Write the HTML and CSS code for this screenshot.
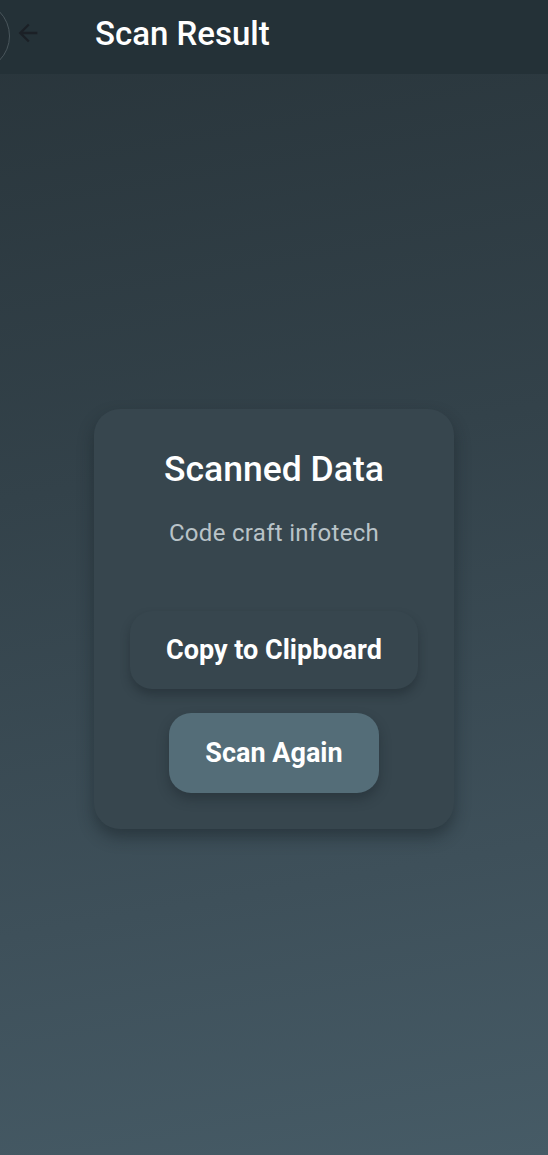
FILE: index.html
```html
<!DOCTYPE html>
<html>
<head>
<meta charset="utf-8">
<link rel="stylesheet" href="styles.css">
</head>
<body>
<div class="page">
  <header class="appbar">
    <div class="back">
      <span class="ripple"></span>
      <svg class="arrow" width="28" height="28" viewBox="0 0 24 24"><path d="M20 11H7.83l5.59-5.59L12 4l-8 8 8 8 1.41-1.41L7.83 13H20v-2z" fill="#1b2026"/></svg>
    </div>
    <h1 class="title">Scan Result</h1>
  </header>
  <main class="content">
    <div class="card">
      <h2 class="card-title">Scanned Data</h2>
      <p class="data">Code craft infotech</p>
      <button class="btn btn-copy">Copy to Clipboard</button>
      <button class="btn btn-scan">Scan Again</button>
    </div>
  </main>
</div>
</body>
</html>
```
FILE: styles.css
```css
* { box-sizing: border-box; }
html, body { margin: 0; padding: 0; }
body {
  width: 548px;
  height: 1155px;
  font-family: Roboto, "Noto Sans", sans-serif;
  background: linear-gradient(170deg, #28343a 0%, #33424a 40%, #3e505a 75%, #465b66 100%);
  overflow: hidden;
}
.page { display: flex; flex-direction: column; height: 1155px; }
.appbar {
  height: 74px;
  background: #243137;
  display: flex;
  align-items: center;
  position: relative;
  flex-shrink: 0;
}
.back {
  width: 95px;
  height: 74px;
  position: relative;
  display: flex;
  align-items: center;
}
.ripple {
  position: absolute;
  left: -60px;
  top: 1px;
  width: 70px;
  height: 70px;
  border-radius: 50%;
  border: 1.5px solid #4a565c;
  background: #222d33;
}
.arrow { position: absolute; left: 14px; top: 19px; }
.title {
  margin: 0;
  color: #ffffff;
  font-size: 33px;
  font-weight: 500;
  position: relative;
  top: -4px;
  letter-spacing: 0;
}
.content {
  flex: 1;
  display: flex;
  justify-content: center;
  padding-top: 335px;
}
.card {
  width: 360px;
  height: 420px;
  background: #37464e;
  border-radius: 26px;
  box-shadow: 0 8px 16px rgba(20, 28, 33, 0.45);
  display: flex;
  flex-direction: column;
  align-items: center;
  padding-top: 40px;
}
.card-title {
  margin: 0;
  color: #ffffff;
  font-size: 35.5px;
  font-weight: 500;
  line-height: 40px;
}
.data {
  margin: 30px 0 0;
  color: #b9c3c8;
  font-size: 24px;
  line-height: 28px;
  letter-spacing: 0.3px;
}
.btn {
  border: none;
  font-family: Roboto, "Noto Sans", sans-serif;
  font-weight: 700;
  font-size: 27px;
  color: #ffffff;
  border-radius: 22px;
  padding: 0;
}
.btn-copy {
  margin-top: 64px;
  width: 288px;
  height: 78px;
  background: #37464e;
  box-shadow: 0 6px 10px rgba(20, 28, 33, 0.35);
}
.btn-scan {
  margin-top: 24px;
  width: 210px;
  height: 80px;
  background: #546d78;
  box-shadow: 0 6px 12px rgba(20, 28, 33, 0.35);
}
```
